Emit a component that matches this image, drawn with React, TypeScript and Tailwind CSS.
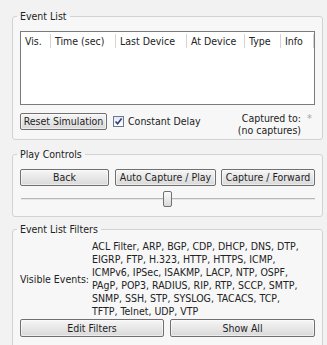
import React from "react";

const font = { fontFamily: '"DejaVu Sans Condensed", "DejaVu Sans", Verdana, sans-serif' };

function Btn({ children, className = "" }: { children: React.ReactNode; className?: string }) {
  return (
    <button
      className={
        "h-[17px] rounded-[2px] border border-[#707070] bg-gradient-to-b from-[#f6f6f6] to-[#d9d9d9] text-[10.5px] leading-[15px] text-[#1e1e1e] shadow-[inset_0_0_0_1px_#ffffff80] " +
        className
      }
    >
      {children}
    </button>
  );
}

function Group({ title, children, className = "" }: { title: string; children: React.ReactNode; className?: string }) {
  return (
    <fieldset className={"mx-[12px] rounded-[3px] border border-[#d2d2d2] bg-[#f7f7f7] px-[7px] " + className}>
      <legend className="-ml-[3px] px-[3px] text-[10.5px] leading-[12px] text-[#222]">{title}</legend>
      {children}
    </fieldset>
  );
}

const filterLines = [
  "ACL Filter, ARP, BGP, CDP, DHCP, DNS, DTP,",
  "EIGRP, FTP, H.323, HTTP, HTTPS, ICMP,",
  "ICMPv6, IPSec, ISAKMP, LACP, NTP, OSPF,",
  "PAgP, POP3, RADIUS, RIP, RTP, SCCP, SMTP,",
  "SNMP, SSH, STP, SYSLOG, TACACS, TCP,",
  "TFTP, Telnet, UDP, VTP",
];

export default function App() {
  const cols = [
    { label: "Vis.", w: 30 },
    { label: "Time (sec)", w: 65 },
    { label: "Last Device", w: 71 },
    { label: "At Device", w: 58 },
    { label: "Type", w: 36 },
    { label: "Info", w: 33 },
  ];
  return (
    <div className="h-[345px] w-[327px] overflow-hidden bg-[#f2f2f2] pt-[10px] text-[#222]" style={font}>
      <Group title="Event List" className="pb-[3px] pt-[9px]">
        <div className="h-[74px] border border-[#7b7b7b] bg-white">
          <div className="flex h-[18px] items-center">
            {cols.map((c) => (
              <div
                key={c.label}
                className="flex h-[14px] shrink-0 items-center border-r border-[#d4d4d4] pl-[4px] text-[10.5px] leading-[12px]"
                style={{ width: c.w }}
              >
                {c.label}
              </div>
            ))}
          </div>
        </div>
        <div className="mt-[7px] flex items-start">
          <Btn className="mt-[1px] w-[87px]">Reset Simulation</Btn>
          <div className="ml-[6px] mt-[3px] flex items-center">
            <span className="flex h-[11px] w-[11px] items-center justify-center border border-[#6e7a8a] bg-gradient-to-b from-[#e4e8f0] to-white">
              <svg width="9" height="9" viewBox="0 0 9 9">
                <path d="M1.5 4.5 L3.6 6.8 L7.6 1.6" fill="none" stroke="#2a3f8a" strokeWidth="1.6" />
              </svg>
            </span>
            <span className="ml-[4px] text-[10.5px] leading-[12px]">Constant Delay</span>
          </div>
          <div className="ml-auto flex items-start">
            <div className="text-right text-[10.5px] leading-[12px]">
              <div>Captured to:</div>
              <div>(no captures)</div>
            </div>
            <span className="ml-[6px] mt-[1px] w-[8px] text-[11px] leading-[12px] text-[#a8a8a8]">*</span>
          </div>
        </div>
      </Group>

      <Group title="Play Controls" className="mt-[8px] pb-[9px] pt-[9px]">
        <div className="flex">
          <Btn className="w-[89px]">Back</Btn>
          <Btn className="ml-[6px] w-[101px]">Auto Capture / Play</Btn>
          <Btn className="ml-[5px] w-[94px]">Capture / Forward</Btn>
        </div>
        <div className="relative mt-[5px] h-[16px]">
          <div className="absolute left-[1px] right-0 top-[7px] h-[2px] border-t border-[#b8b8b8] bg-[#e6e6e6]" />
          <div className="absolute left-[143px] top-0 h-[16px] w-[9px] rounded-[2px] border border-[#707070] bg-gradient-to-b from-[#fafafa] to-[#dadada]" />
        </div>
      </Group>

      <Group title="Event List Filters" className="mt-[6px] h-[140px] pt-[5px]">
        <div className="flex items-center">
          <div className="mr-[3px] shrink-0 whitespace-nowrap text-[10.5px] leading-[12px]">Visible Events:</div>
          <div className="whitespace-nowrap text-[10.5px] leading-[13px]">
            {filterLines.map((l) => (
              <div key={l}>{l}</div>
            ))}
          </div>
        </div>
        <div className="mt-[1px] flex">
          <Btn className="h-[18px] w-[144px]">Edit Filters</Btn>
          <Btn className="ml-[6px] h-[18px] w-[145px]">Show All</Btn>
        </div>
      </Group>
    </div>
  );
}
